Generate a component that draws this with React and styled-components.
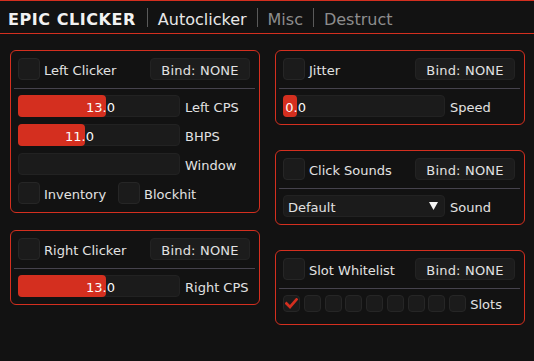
import React from "react";
import styled, { createGlobalStyle } from "styled-components";

const RED = "#d42f1f";

const GlobalStyle = createGlobalStyle`
  html, body {
    margin: 0;
    padding: 0;
    background: #121212;
  }
  body {
    font-family: "DejaVu Sans", Verdana, sans-serif;
    font-size: 13px;
    color: #e2e2e2;
    width: 534px;
    height: 361px;
    overflow: hidden;
  }
`;

const TopBar = styled.div`
  display: flex;
  align-items: center;
  height: 32px;
  border-top: 1px solid ${RED};
  border-bottom: 1px solid ${RED};
`;

const Tab = styled.div`
  font-size: 16px;
  padding: 5px 10px 0;
  color: ${(p) => (p.$active ? "#e8e8e8" : "#8d8d8d")};
  ${(p) =>
    p.$brand &&
    `
    font-weight: bold;
    color: #f2f2f2;
    letter-spacing: 0.55px;
    padding-left: 8px;
    padding-right: 11px;
  `}
`;

const TabDivider = styled.div`
  width: 1px;
  height: 19px;
  margin-top: 1px;
  background: #5a5a5a;
`;

const Main = styled.div`
  display: flex;
  gap: 15px;
  padding: 16px 0 0 10px;
`;

const Column = styled.div`
  display: flex;
  flex-direction: column;
  width: 250px;
  gap: ${(p) => p.$gap}px;
`;

const Panel = styled.div`
  display: flex;
  flex-direction: column;
  gap: 7px;
  border: 1px solid ${RED};
  border-radius: 6px;
  padding: 7px 9px ${(p) => p.$bottom || 7}px 7px;
`;

const Row = styled.div`
  display: flex;
  align-items: center;
  height: 22px;
  gap: 4px;
`;

const Separator = styled.div`
  height: 1px;
  background: #46434d;
  margin: 1px -5px -1px -4px;
`;

const Box = styled.div`
  flex: none;
  width: ${(p) => p.$size || 22}px;
  height: ${(p) => p.$size || 22}px;
  box-sizing: border-box;
  background: #1b1b1b;
  border: 1px solid #262626;
  border-radius: 4px;
  display: flex;
  align-items: center;
  justify-content: center;
`;

const Label = styled.span`
  white-space: nowrap;
  color: #e2e2e2;
  padding-top: 2px;
  margin-right: ${(p) => p.$after || 0}px;
`;

const BindButton = styled.div`
  margin-left: auto;
  width: 100px;
  height: 22px;
  box-sizing: border-box;
  background: #1c1c1c;
  border: 1px solid #232323;
  border-radius: 4px;
  display: flex;
  align-items: center;
  justify-content: center;
  padding-top: 2px;
  color: #e2e2e2;
  letter-spacing: 0.2px;
`;

const SliderTrack = styled.div`
  position: relative;
  flex: none;
  width: 162px;
  height: 22px;
  box-sizing: border-box;
  background: #1b1b1b;
  border: 1px solid #222;
  border-radius: 4px;
  margin-right: 1px;
`;

const SliderFill = styled.div`
  height: 100%;
  background: ${RED};
  border-radius: 4px;
  margin: -1px 0 0 -1px;
  padding-bottom: 2px;
`;

const SliderValue = styled.span`
  position: absolute;
  top: 2px;
  bottom: 0;
  display: flex;
  align-items: center;
  color: #fafafa;
`;

const Combo = styled.div`
  display: flex;
  align-items: center;
  justify-content: space-between;
  flex: none;
  width: 162px;
  height: 22px;
  box-sizing: border-box;
  background: #1b1b1b;
  border: 1px solid #222;
  border-radius: 4px;
  padding: 0 6px 0 4px;
  margin-right: 1px;

  span {
    padding-top: 2px;
  }
`;

const SlotRow = styled.div`
  display: flex;
  align-items: center;
  gap: 3.75px;
  height: 17px;
  margin-bottom: 5px;
`;

const SlotsLabel = styled.span`
  margin-left: 0.5px;
  padding-top: 1px;
  color: #e2e2e2;
`;

const Check = () => (
  <svg width="13" height="11" viewBox="0 0 13 11">
    <polyline
      points="1.5,5.5 5,9 11.5,1.5"
      fill="none"
      stroke={RED}
      strokeWidth="2.7"
      strokeLinecap="square"
    />
  </svg>
);

const Toggle = ({ label }) => (
  <Row>
    <Box />
    <Label>{label}</Label>
    <BindButton>Bind: NONE</BindButton>
  </Row>
);

const Slider = ({ fill, value, label }) => (
  <Row>
    <SliderTrack>
      <SliderFill style={{ width: fill }} />
      <SliderValue style={{ right: `calc(100% - ${fill + 8}px)` }}>{value}</SliderValue>
    </SliderTrack>
    <Label>{label}</Label>
  </Row>
);

const App = () => {
  return (
    <>
      <GlobalStyle />
      <TopBar>
        <Tab $brand>EPIC CLICKER</Tab>
        <TabDivider />
        <Tab $active>Autoclicker</Tab>
        <TabDivider />
        <Tab>Misc</Tab>
        <TabDivider />
        <Tab>Destruct</Tab>
      </TopBar>
      <Main>
        <Column $gap={17}>
          <Panel $bottom={8}>
            <Toggle label="Left Clicker" />
            <Separator />
            <Slider fill={88} value="13.0" label="Left CPS" />
            <Slider fill={67} value="11.0" label="BHPS" />
            <Slider fill={0} value="" label="Window" />
            <Row>
              <Box />
              <Label $after={8}>Inventory</Label>
              <Box />
              <Label>Blockhit</Label>
            </Row>
          </Panel>
          <Panel>
            <Toggle label="Right Clicker" />
            <Separator />
            <Slider fill={88} value="13.0" label="Right CPS" />
          </Panel>
        </Column>
        <Column $gap={25}>
          <Panel>
            <Toggle label="Jitter" />
            <Separator />
            <Slider fill={14} value="0.0" label="Speed" />
          </Panel>
          <Panel>
            <Toggle label="Click Sounds" />
            <Separator />
            <Row>
              <Combo>
                <span>Default</span>
                <svg width="9" height="8" viewBox="0 0 9 8">
                  <polygon points="0,0 9,0 4.5,8" fill="#f4f4f4" />
                </svg>
              </Combo>
              <Label>Sound</Label>
            </Row>
          </Panel>
          <Panel>
            <Toggle label="Slot Whitelist" />
            <Separator />
            <SlotRow>
              {Array.from({ length: 9 }).map((_, i) => (
                <Box key={i} $size={17}>
                  {i === 0 && <Check />}
                </Box>
              ))}
              <SlotsLabel>Slots</SlotsLabel>
            </SlotRow>
          </Panel>
        </Column>
      </Main>
    </>
  );
};

export default App;
